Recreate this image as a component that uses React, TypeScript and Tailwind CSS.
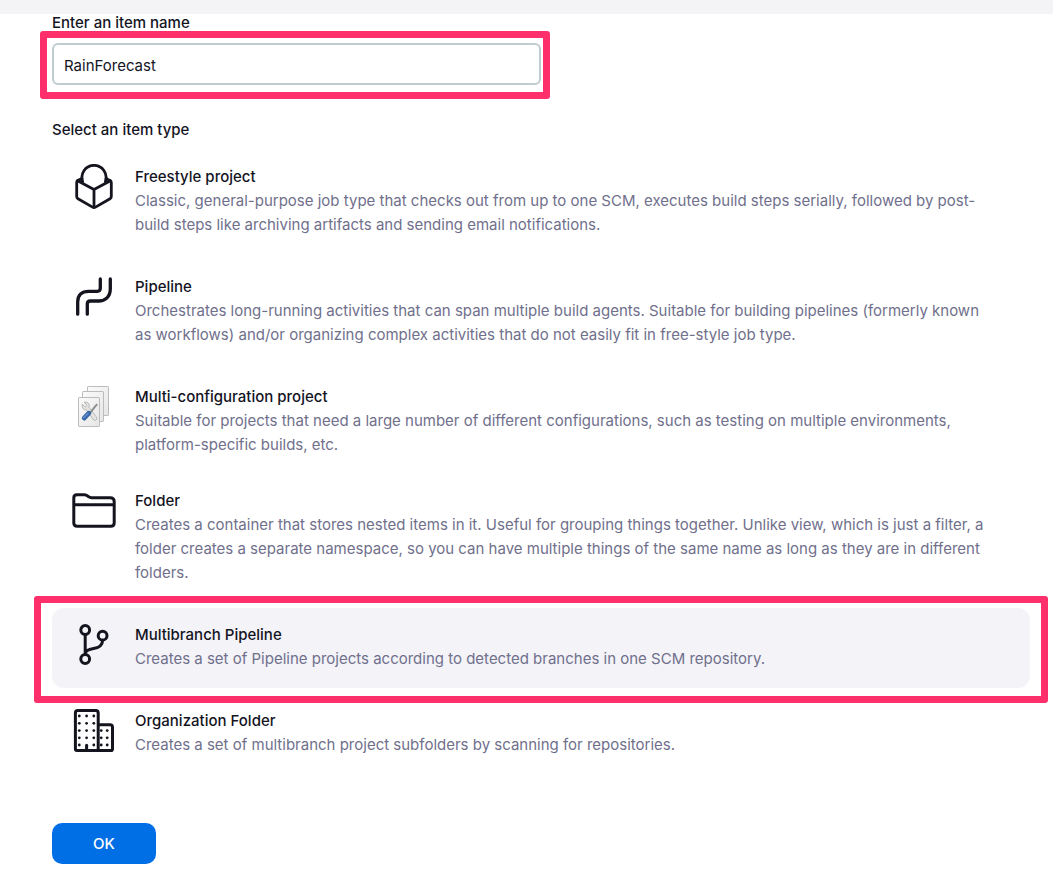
import React from "react";

const stroke = {
  fill: "none",
  stroke: "#14141f",
  strokeWidth: 3,
  strokeLinecap: "round" as const,
  strokeLinejoin: "round" as const,
};

function Icon({ children }: { children: React.ReactNode }) {
  return (
    <svg viewBox="0 0 48 48" className="size-12 shrink-0" aria-hidden="true">
      {children}
    </svg>
  );
}

function FreestyleIcon() {
  return (
    <Icon>
      <g {...stroke} strokeWidth={2.8}>
        <path d="M12.6 17.5A12.1 12.1 0 1 1 35.4 17.5" />
        <path d="M12 14.6L8 16.4Q6.7 17 6.7 18.5V32.6Q6.7 34 8 34.8L22.5 43.1Q24 44 25.5 43.1L40 34.8Q41.3 34 41.3 32.6V18.5Q41.3 17 40 16.4L36 14.6" />
        <path d="M7.6 16.8L24 25.6L40.4 16.8M24 25.6V43" />
      </g>
    </Icon>
  );
}

function PipelineIcon() {
  return (
    <Icon>
      <g {...stroke} strokeWidth={3.3}>
        <path d="M7.7 40.2V28C7.7 21 12 17.3 18.5 17.3H27.3Q30.3 17.3 30.3 14.3V5" />
        <path d="M40.3 5V15C40.3 22.5 35.5 27 28.5 27H20.3Q17.3 27 17.3 30V40.2" />
      </g>
    </Icon>
  );
}

function MatrixIcon() {
  return (
    <Icon>
      <defs>
        <linearGradient id="sheet" x1="0" y1="0" x2="1" y2="1">
          <stop offset="0" stopColor="#fbfbfb" />
          <stop offset="1" stopColor="#e6e6e6" />
        </linearGradient>
      </defs>
      <g fill="url(#sheet)" stroke="#bcbdbb" strokeWidth="1">
        <rect x="17.5" y="2.5" width="21" height="29" rx="0.6" />
        <rect x="12.5" y="7.5" width="21" height="30" rx="0.6" />
        <rect x="8.5" y="13.5" width="21" height="29" rx="0.6" />
      </g>
      <path
        d="M12 20.2L15.2 23L16.8 21.3L14.3 18.2Q18.5 17.6 19.3 21.5L19 23.4L26.6 33.2Q27.8 35.4 25.8 36.3Q24.2 37 22.8 35L16.4 25.8Q12 26.2 12 20.2Z"
        fill="#e4e4e2"
        stroke="#a9aba8"
        strokeWidth="0.8"
      />
      <path d="M19 30.3L25 22.7L27.2 20.2" stroke="#8b8f91" strokeWidth="2" fill="none" />
      <path d="M14.2 34.1L18.8 29.2" stroke="#3a67a8" strokeWidth="4.8" strokeLinecap="round" />
      <path d="M13.8 33.7L18 29.2" stroke="#5f91d0" strokeWidth="1.5" strokeLinecap="round" />
    </Icon>
  );
}

function FolderIcon() {
  return (
    <Icon>
      <g {...stroke}>
        <path d="M3.8 16.7V9.7Q3.8 6.7 6.8 6.7H14.5Q16.2 6.7 17.5 7.9L18.6 8.7Q19.8 9.7 21.5 9.7H40.2Q44.2 9.7 44.2 13.7V35Q44.2 38.3 40.9 38.3H7.1Q3.8 38.3 3.8 35V16.7H44.2" />
      </g>
    </Icon>
  );
}

function BranchIcon() {
  return (
    <Icon>
      <g {...stroke}>
        <circle cx="15.2" cy="8" r="4.4" />
        <circle cx="32.6" cy="13.7" r="4.4" />
        <circle cx="15.2" cy="37" r="4.4" />
        <path d="M15.2 12.6V32.4M32.6 18.4C32.4 24.5 28 25.8 23.5 26.6C19 27.4 15.6 28.6 15.2 31.6" />
      </g>
    </Icon>
  );
}

function BuildingIcon() {
  const dots = [
    [9.3, 8], [16.6, 8], [23.8, 8],
    [9.3, 15.3], [16.6, 15.3], [23.8, 15.3],
    [9.3, 22.6], [16.6, 22.6], [23.8, 22.6], [31.2, 22.6], [37.2, 22.6],
    [9.3, 29.8], [16.6, 29.8], [23.8, 29.8], [31.2, 29.8], [37.2, 29.8],
    [9.3, 37], [23.8, 37], [31.2, 37], [37.2, 37],
  ];
  return (
    <Icon>
      <g {...stroke}>
        <path d="M28.2 42.5H7Q5.4 42.5 5.4 40.8V5Q5.4 2.5 7.9 2.5H25.7Q28.2 2.5 28.2 5V42.5H40.9Q42.5 42.5 42.5 40.9V19.2Q42.5 16.7 40 16.7H28.2" />
        <path d="M16.6 37.3V42" />
      </g>
      {dots.map(([x, y]) => (
        <circle key={`${x}-${y}`} cx={x} cy={y} r="1.4" fill="#14141f" />
      ))}
    </Icon>
  );
}

type Item = {
  id: string;
  title: string;
  description: string;
  icon: () => React.JSX.Element;
  spacing?: string;
};

const items: Item[] = [
  {
    id: "freestyle",
    title: "Freestyle project",
    description:
      "Classic, general-purpose job type that checks out from up to one SCM, executes build steps serially, followed by post-build steps like archiving artifacts and sending email notifications.",
    icon: FreestyleIcon,
  },
  {
    id: "pipeline",
    title: "Pipeline",
    description:
      "Orchestrates long-running activities that can span multiple build agents. Suitable for building pipelines (formerly known as workflows) and/or organizing complex activities that do not easily fit in free-style job type.",
    icon: PipelineIcon,
  },
  {
    id: "matrix",
    title: "Multi-configuration project",
    description:
      "Suitable for projects that need a large number of different configurations, such as testing on multiple environments, platform-specific builds, etc.",
    icon: MatrixIcon,
    spacing: "mb-0",
  },
  {
    id: "folder",
    title: "Folder",
    description:
      "Creates a container that stores nested items in it. Useful for grouping things together. Unlike view, which is just a filter, a folder creates a separate namespace, so you can have multiple things of the same name as long as they are in different folders.",
    icon: FolderIcon,
  },
  {
    id: "multibranch",
    title: "Multibranch Pipeline",
    description:
      "Creates a set of Pipeline projects according to detected branches in one SCM repository.",
    icon: BranchIcon,
  },
  {
    id: "organization",
    title: "Organization Folder",
    description:
      "Creates a set of multibranch project subfolders by scanning for repositories.",
    icon: BuildingIcon,
  },
];

export default function App() {
  const [name, setName] = React.useState("RainForecast");
  const [selected, setSelected] = React.useState("multibranch");

  return (
    <div className="min-h-screen bg-white font-['Inter','Liberation_Sans',sans-serif] text-[15px] text-[#14141f]">
      <header className="h-3.5 bg-[#f4f4f7]" />
      <form
        className="pr-[23px] pb-6 pl-[52px]"
        onSubmit={(event) => event.preventDefault()}
      >
        <label htmlFor="name" className="block leading-[18px] font-medium">
          Enter an item name
        </label>
        <div className="relative mt-[11px] w-1/2">
          <input
            id="name"
            type="text"
            value={name}
            onChange={(event) => setName(event.target.value)}
            className="block h-[42px] w-full rounded-md border-2 border-[#c0cccf] bg-white px-2.5 pt-0.5 outline-none"
          />
          <div className="pointer-events-none absolute -top-3 -right-[9px] -bottom-3.5 -left-3 rounded-[3px] border-7 border-[#ff2f6c]" />
        </div>

        <fieldset className="mt-[33px]">
          <legend className="leading-6 font-medium">Select an item type</legend>
          <div className="mt-2">
            {items.map(({ id, title, description, icon: ItemIcon, spacing = "mb-1.5" }) => (
              <div key={id} className={`relative ${spacing}`}>
                <label
                  className={`flex cursor-pointer gap-[17px] rounded-xl pt-3.5 pr-10 pb-[18px] pl-[18px] ${
                    selected === id ? "bg-[#f3f3f8]" : ""
                  }`}
                >
                  <input
                    type="radio"
                    name="type"
                    value={id}
                    checked={selected === id}
                    onChange={() => setSelected(id)}
                    className="sr-only"
                  />
                  <ItemIcon />
                  <span className="-mb-px flex min-w-0 flex-col pt-px leading-6">
                    <span className="font-medium">{title}</span>
                    <span className="text-[#70708c]">{description}</span>
                  </span>
                </label>
                {id === "multibranch" && (
                  <div className="pointer-events-none absolute -inset-x-[18px] -top-3 -bottom-[15px] rounded-[3px] border-7 border-[#ff2f6c]" />
                )}
              </div>
            ))}
          </div>
        </fieldset>

        <button
          type="submit"
          className="mt-[43px] h-[41px] w-26 rounded-[10px] bg-[#006fe6] pt-0.5 font-medium text-white"
        >
          OK
        </button>
      </form>
    </div>
  );
}
